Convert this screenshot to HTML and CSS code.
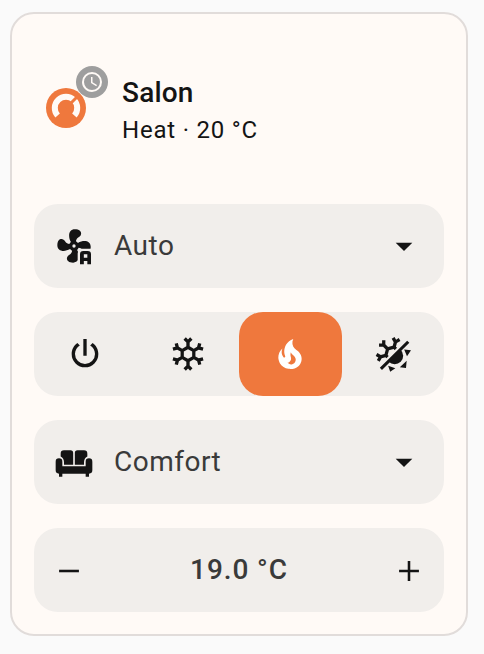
FILE: index.html
```html
<!DOCTYPE html>
<html lang="en">
<head>
<meta charset="utf-8">
<title>Salon</title>
<link rel="stylesheet" href="styles.css">
</head>
<body>
<main class="card">
  <header class="header">
    <div class="state">
      <svg class="gauge" viewBox="0 0 40 40">
        <circle cx="20" cy="20" r="20" fill="#ef783d"/>
        <path d="M11.6 27.4A11.2 11.2 0 1 1 28.4 27.4" fill="none" stroke="#fffaf6" stroke-width="6"/>
        <path d="M20 20L33 7" stroke="#ef783d" stroke-width="3"/>
      </svg>
      <span class="badge"><svg class="clock" viewBox="0 0 24 24"><path d="M12,20A8,8 0 0,0 20,12A8,8 0 0,0 12,4A8,8 0 0,0 4,12A8,8 0 0,0 12,20M12,2A10,10 0 0,1 22,12A10,10 0 0,1 12,22C6.47,22 2,17.5 2,12A10,10 0 0,1 12,2M12.5,7V12.25L17,14.92L16.25,16.15L11,13V7H12.5Z"/></svg></span>
    </div>
    <div class="info">
      <div class="name">Salon</div>
      <div class="status">Heat · 20 °C</div>
    </div>
  </header>

  <div class="row select">
    <svg class="icon" viewBox="0 0 24 24">
      <clipPath id="fan-area"><path d="M0 0H24V13.6H15.6Q14.2 14.4 14.2 16.5V24H0Z"/></clipPath>
      <path clip-path="url(#fan-area)" d="M12,11A1,1 0 0,0 11,12A1,1 0 0,0 12,13A1,1 0 0,0 13,12A1,1 0 0,0 12,11M12.5,2C17,2 17.11,5.57 14.75,6.75C13.76,7.24 13.32,8.29 13.13,9.22C13.61,9.42 14.03,9.73 14.35,10.13C18.05,8.13 22.03,8.92 22.03,12.5C22.03,17 18.46,17.1 17.28,14.73C16.78,13.74 15.72,13.3 14.79,13.11C14.59,13.59 14.28,14 13.88,14.34C15.87,18.03 15.08,22 11.5,22C7,22 6.91,18.42 9.27,17.24C10.25,16.75 10.69,15.71 10.89,14.79C10.4,14.59 9.97,14.27 9.65,13.87C5.96,15.85 2,15.07 2,11.5C2,7 5.56,6.89 6.74,9.26C7.24,10.25 8.29,10.68 9.22,10.87C9.41,10.39 9.73,9.97 10.14,9.65C8.15,5.96 8.94,2 12.5,2Z"/>
      <path fill-rule="evenodd" d="M17.6 15A2 2 0 0 0 15.6 17V23H17.9V21H20V23H22.2V17A2 2 0 0 0 20.2 15ZM17.9 17H20V19H17.9Z"/>
    </svg>
    <span class="label">Auto</span>
    <svg class="arrow" viewBox="0 0 24 24"><path d="M7,10L12,15L17,10H7Z"/></svg>
  </div>

  <div class="row modes">
    <button class="mode" aria-label="Off"><svg class="icon" viewBox="0 0 24 24"><path d="M16.56,5.44L15.11,6.89C16.84,7.94 18,9.83 18,12A6,6 0 0,1 12,18A6,6 0 0,1 6,12C6,9.83 7.16,7.94 8.88,6.88L7.44,5.44C5.36,6.88 4,9.28 4,12A8,8 0 0,0 12,20A8,8 0 0,0 20,12C20,9.28 18.64,6.88 16.56,5.44M13,3H11V13H13"/></svg></button>
    <button class="mode" aria-label="Cool"><svg class="icon" viewBox="0 0 24 24"><path id="snowflake" d="M20.79,13.95L18.46,14.57L16.46,13.44V10.56L18.46,9.43L20.79,10.05L21.31,8.12L19.54,7.65L20,5.88L18.07,5.36L17.45,7.69L15.45,8.82L13,7.38V5.12L14.71,3.41L13.29,2L12,3.29L10.71,2L9.29,3.41L11,5.12V7.38L8.5,8.82L6.5,7.69L5.92,5.36L4,5.88L4.47,7.65L2.7,8.12L3.22,10.05L5.55,9.43L7.55,10.56V13.45L5.55,14.58L3.22,13.96L2.7,15.89L4.47,16.36L4,18.12L5.93,18.64L6.55,16.31L8.55,15.18L11,16.62V18.88L9.29,20.59L10.71,22L12,20.71L13.29,22L14.7,20.59L13,18.88V16.62L15.5,15.17L17.5,16.3L18.12,18.63L20,18.12L19.53,16.35L21.3,15.88L20.79,13.95M9.5,10.56L12,9.11L14.5,10.56V13.44L12,14.89L9.5,13.44V10.56Z"/></svg></button>
    <button class="mode active" aria-label="Heat"><svg class="icon" viewBox="0 0 24 24"><path d="M17.66 11.2C17.43 10.9 17.15 10.64 16.89 10.38C16.22 9.78 15.46 9.35 14.82 8.72C13.33 7.26 13 4.85 13.95 3C13 3.23 12.17 3.75 11.46 4.32C8.87 6.4 7.85 10.07 9.07 13.22C9.11 13.32 9.15 13.42 9.15 13.55C9.15 13.77 9 13.97 8.8 14.05C8.57 14.15 8.33 14.09 8.14 13.93C8.08 13.88 8.04 13.83 8 13.76C6.87 12.33 6.69 10.28 7.45 8.64C5.78 10 4.87 12.3 5 14.47C5.06 14.97 5.12 15.47 5.29 15.97C5.43 16.57 5.7 17.17 6 17.7C7.08 19.43 8.95 20.67 10.96 20.92C13.1 21.19 15.39 20.8 17.03 19.32C18.86 17.66 19.5 15 18.56 12.72L18.43 12.46C18.22 12 17.66 11.2 17.66 11.2M14.5 17.5C14.22 17.74 13.76 18 13.4 18.1C12.28 18.5 11.16 17.94 10.5 17.28C11.69 17 12.4 16.12 12.61 15.23C12.78 14.43 12.46 13.77 12.33 13C12.21 12.26 12.23 11.63 12.5 10.94C12.69 11.32 12.89 11.7 13.13 12C13.9 13 15.11 13.44 15.37 14.8C15.41 14.94 15.43 15.08 15.43 15.23C15.46 16.05 15.1 16.95 14.5 17.5H14.5Z"/></svg></button>
    <button class="mode" aria-label="Heat and cool"><svg class="icon" viewBox="0 0 24 24">
      <clipPath id="cold-half"><path d="M-2 -2H21.5L17.5 5.3L5.3 17.3L-2 21.5Z"/></clipPath>
      <clipPath id="warm-half"><path d="M26 0V26H0Z"/></clipPath>
      <g clip-path="url(#cold-half)"><use href="#snowflake" transform="translate(-.4 -.2) rotate(15 12 12)"/></g>
      <circle cx="13" cy="13.1" r="5.1" clip-path="url(#warm-half)"/>
      <path d="M4.1 20.3L20.5 4L21.8 5.3L5.4 21.6ZM18.7 9.3L22.8 9.8L20.4 13.3ZM20.2 16.1L19.8 20.4L16.1 19.9ZM9.1 19L13.4 20.6L10.3 22.7Z"/>
    </svg></button>
  </div>

  <div class="row select">
    <svg class="icon" viewBox="0 0 24 24">
      <path d="M6 5H9.9Q11.5 5 11.5 6.6V13.6H6V12.2Q6 9.7 4 8.7V7Q4 5 6 5ZM14.1 5H18Q20 5 20 7V8.7Q18 9.7 18 12.2V13.6H12.5V6.6Q12.5 5 14.1 5Z"/>
      <path d="M3 9.8A2 2 0 0 1 5 11.8V14.6H19V11.8A2 2 0 0 1 23 11.8V17A2 2 0 0 1 21 19V20.8H19V19H5V20.8H3V19A2 2 0 0 1 1 17V11.8A2 2 0 0 1 3 9.8Z"/>
    </svg>
    <span class="label">Comfort</span>
    <svg class="arrow" viewBox="0 0 24 24"><path d="M7,10L12,15L17,10H7Z"/></svg>
  </div>

  <div class="row number">
    <svg class="step" viewBox="0 0 24 24"><path d="M19,12.9H5V11.1H19V12.9Z"/></svg>
    <span class="value">19.0 °C</span>
    <svg class="step" viewBox="0 0 24 24"><path d="M19,12.9H12.9V19H11.1V12.9H5V11.1H11.1V5H12.9V11.1H19V12.9Z"/></svg>
  </div>
</main>
</body>
</html>
```
FILE: styles.css
```css
* { box-sizing: border-box; }
body {
  margin: 0;
  padding: 12px 16px 18px 10px;
  background: #fafafa;
  color: #141414;
  font-family: Roboto, sans-serif;
}
.card {
  width: 458px;
  height: 624px;
  padding: 22px;
  border: 2px solid #e1dcda;
  border-radius: 24px;
  background: #fffaf6;
  display: flex;
  flex-direction: column;
  gap: 24px;
}
.header {
  height: 144px;
  padding-left: 12px;
  display: flex;
  align-items: center;
  gap: 36px;
}
.state { position: relative; width: 40px; height: 40px; }
.gauge { display: block; width: 40px; height: 40px; }
.badge {
  position: absolute;
  top: -22px;
  left: 30px;
  width: 32px;
  height: 32px;
  border-radius: 50%;
  background: #9e9e9e;
  display: flex;
  align-items: center;
  justify-content: center;
}
.clock { width: 24px; height: 24px; fill: #fffaf6; }
.info { padding-top: 4px; }
.name { font-size: 28px; line-height: 40px; font-weight: 500; letter-spacing: 0.2px; }
.status { font-size: 24px; line-height: 34px; letter-spacing: 0.8px; }
.row {
  height: 84px;
  flex: none;
  border-radius: 24px;
  background: #f1eeeb;
  display: flex;
  align-items: center;
}
.select { padding: 0 20px; }
.icon { display: block; width: 40px; height: 40px; fill: currentColor; }
.label { flex: 1; margin-left: 20px; padding-bottom: 2px; font-size: 28px; letter-spacing: 0.5px; color: #3a3a3a; }
.arrow { width: 40px; height: 40px; fill: currentColor; }
.mode {
  flex: 1;
  height: 84px;
  padding: 0;
  border: 0;
  border-radius: 24px;
  background: none;
  color: inherit;
  display: flex;
  align-items: center;
  justify-content: center;
}
.mode.active { background: #ef783d; color: #fff; }
.number { justify-content: space-between; padding: 0 18px; }
.step { width: 34px; height: 34px; margin-top: 2px; fill: currentColor; }
.value { padding-bottom: 2px; font-size: 28px; font-weight: 500; letter-spacing: 0.9px; color: #3a3a3a; }
```
